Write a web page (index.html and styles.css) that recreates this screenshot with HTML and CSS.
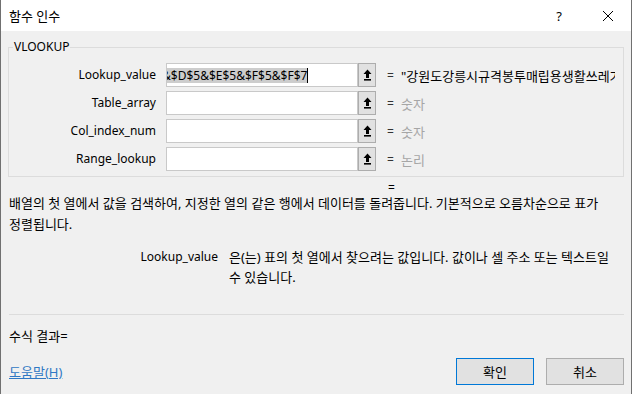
FILE: index.html
```html
<!DOCTYPE html>
<html lang="ko">
<head>
<meta charset="utf-8">
<title>함수 인수</title>
<link rel="stylesheet" href="styles.css">
</head>
<body>
<div class="dlg">
  <div class="titlebar">
    <span class="title ko">함수 인수</span>
    <span class="help">?</span>
    <span class="close"><svg width="12" height="12" viewBox="0 0 12 12"><path d="M1 1 L11 11 M11 1 L1 11" stroke="#000" stroke-width="1" fill="none"/></svg></span>
  </div>
  <div class="body">
    <fieldset class="group">
      <legend>VLOOKUP</legend>
      <div class="row">
        <span class="label">Lookup_value</span>
        <div class="input"><span class="input-text sel">&amp;$D$5&amp;$E$5&amp;$F$5&amp;$F$7</span><span class="caret"></span></div>
        <span class="ref"><svg width="9" height="12" viewBox="0 0 9 12"><path d="M4.5 0.5 L8.5 5 L6 5 L6 9 L3 9 L3 5 L0.5 5 Z" fill="#000"/><rect x="1" y="10" width="7" height="1.6" fill="#000"/></svg></span>
        <span class="eq">=</span>
        <span class="val ko">"강원도강릉시규격봉투매립용생활쓰레기"</span>
      </div>
      <div class="row">
        <span class="label">Table_array</span>
        <div class="input"></div>
        <span class="ref"><svg width="9" height="12" viewBox="0 0 9 12"><path d="M4.5 0.5 L8.5 5 L6 5 L6 9 L3 9 L3 5 L0.5 5 Z" fill="#000"/><rect x="1" y="10" width="7" height="1.6" fill="#000"/></svg></span>
        <span class="eq">=</span>
        <span class="val ko dim">숫자</span>
      </div>
      <div class="row">
        <span class="label">Col_index_num</span>
        <div class="input"></div>
        <span class="ref"><svg width="9" height="12" viewBox="0 0 9 12"><path d="M4.5 0.5 L8.5 5 L6 5 L6 9 L3 9 L3 5 L0.5 5 Z" fill="#000"/><rect x="1" y="10" width="7" height="1.6" fill="#000"/></svg></span>
        <span class="eq">=</span>
        <span class="val ko dim">숫자</span>
      </div>
      <div class="row">
        <span class="label">Range_lookup</span>
        <div class="input"></div>
        <span class="ref"><svg width="9" height="12" viewBox="0 0 9 12"><path d="M4.5 0.5 L8.5 5 L6 5 L6 9 L3 9 L3 5 L0.5 5 Z" fill="#000"/><rect x="1" y="10" width="7" height="1.6" fill="#000"/></svg></span>
        <span class="eq">=</span>
        <span class="val ko dim">논리</span>
      </div>
    </fieldset>
    <div class="result-eq">=</div>
    <p class="desc ko">배열의 첫 열에서 값을 검색하여, 지정한 열의 같은 행에서 데이터를 돌려줍니다. 기본적으로 오름차순으로 표가 정렬됩니다.</p>
    <div class="argdesc">
      <span class="argname">Lookup_value</span>
      <p class="argtext ko">은(는) 표의 첫 열에서 찾으려는 값입니다. 값이나 셀 주소 또는 텍스트일 수 있습니다.</p>
    </div>
    <div class="bottom">
      <div class="sep"></div>
      <div class="formula ko">수식 결과=</div>
      <div class="footer">
        <a class="helplink ko" href="#">도움말(H)</a>
        <div class="buttons">
          <span class="btn default ko">확인</span>
          <span class="btn ko">취소</span>
        </div>
      </div>
    </div>
  </div>
</div>
</body>
</html>
```
FILE: styles.css
```css
html, body {
  margin: 0;
  padding: 0;
}
body {
  width: 632px;
  height: 394px;
  overflow: hidden;
  font-family: "Noto Sans", "Noto Sans CJK KR", sans-serif;
  font-size: 12px;
  color: #000;
}
.ko {
  font-size: 13px;
  word-break: keep-all;
}
.dlg {
  width: 632px;
  height: 394px;
  box-sizing: border-box;
  border-left: 1px solid #707070;
  border-right: 1px solid #707070;
  display: flex;
  flex-direction: column;
  background: #f0f0f0;
}
.titlebar {
  height: 31px;
  flex: none;
  background: #fff;
  display: flex;
  align-items: center;
  padding-left: 8px;
}
.title {
  flex: 1;
  line-height: 16px;
}
.help {
  width: 46px;
  text-align: center;
  font-size: 13px;
  margin-right: 3px;
}
.close {
  width: 46px;
  display: flex;
  justify-content: center;
}
.body {
  flex: 1;
  display: flex;
  flex-direction: column;
  padding: 0 7px 9px 7px;
}
.group {
  margin: 8px 0 0 0;
  border: 1px solid #dcdcdc;
  padding: 8px 4px 5px 4px;
  display: flex;
  flex-direction: column;
  gap: 4px;
}
.group legend {
  padding: 0 1px;
  line-height: 16px;
}
.row {
  display: flex;
  align-items: center;
  height: 24px;
}
.label {
  width: 143px;
  text-align: right;
  margin-right: 10px;
  line-height: 16px;
}
.input {
  width: 190px;
  height: 22px;
  border: 1px solid #c9c9c9;
  background: #fff;
  display: flex;
  align-items: center;
  overflow: hidden;
  white-space: nowrap;
}
.input-text {
  margin-left: -5px;
  line-height: 15px;
}
.sel {
  background: #cdcdcd;
}
.caret {
  width: 1px;
  height: 15px;
  background: #000;
}
.ref {
  width: 16px;
  height: 22px;
  border: 1px solid #adadad;
  background: #e1e1e1;
  display: flex;
  align-items: center;
  justify-content: center;
}
.eq {
  margin-left: 11px;
  width: 14px;
  color: #333;
}
.val {
  width: 214px;
  overflow: hidden;
  white-space: nowrap;
}
.dim {
  color: #a6a6a6;
}
.result-eq {
  margin: 5px 0 0 380px;
  line-height: 11px;
  height: 11px;
}
.desc {
  margin: 0 0 0 1px;
  line-height: 21px;
}
.argdesc {
  display: flex;
  margin-top: 12px;
}
.argname {
  width: 210px;
  text-align: right;
  flex: none;
  line-height: 20px;
}
.argtext {
  margin: 0 0 0 11px;
  line-height: 20px;
}
.bottom {
  margin-top: auto;
  display: flex;
  flex-direction: column;
}
.sep {
  height: 1px;
  background: #dcdcdc;
  margin: 0 0 0 1px;
}
.formula {
  margin: 13px 0 0 1px;
  line-height: 16px;
}
.footer {
  display: flex;
  align-items: center;
  justify-content: space-between;
  margin-top: 14px;
  padding-left: 1px;
}
.helplink {
  color: #2f78c4;
  text-decoration: underline;
}
.buttons {
  display: flex;
  gap: 12px;
}
.btn {
  width: 76px;
  height: 25px;
  border: 1px solid #adadad;
  background: #e1e1e1;
  display: flex;
  align-items: center;
  justify-content: center;
}
.btn.default {
  border-color: #0078d7;
}
```
